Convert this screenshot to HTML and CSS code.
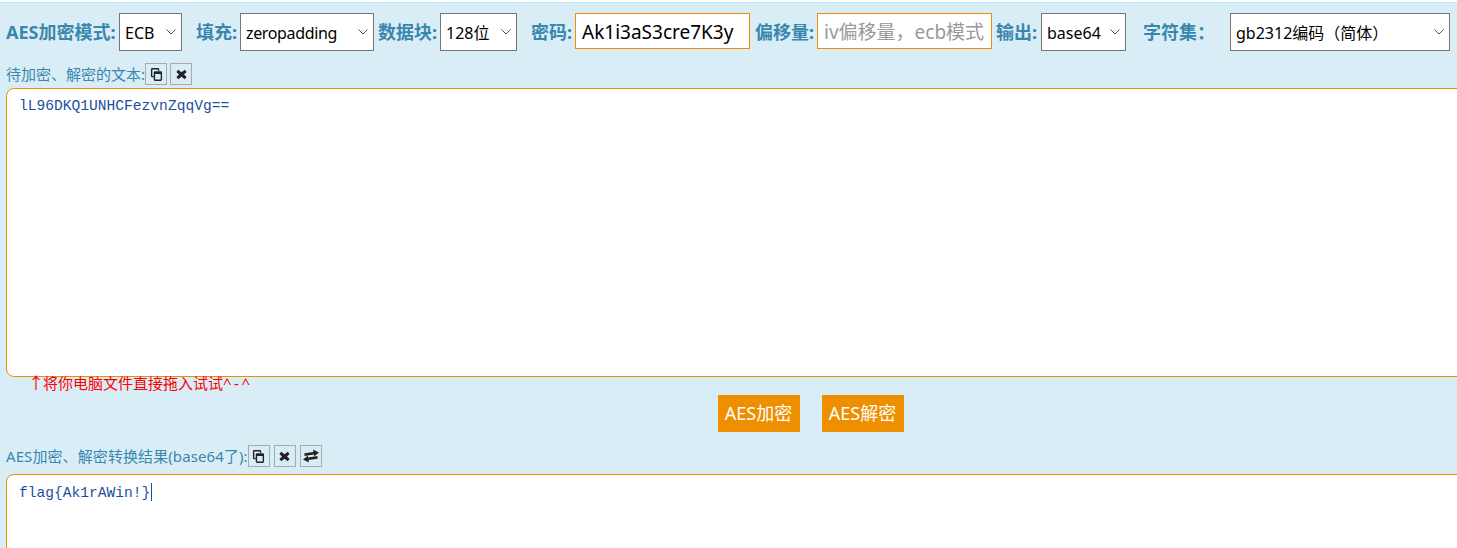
FILE: index.html
```html
<!DOCTYPE html>
<html lang="zh-CN">
<head>
<meta charset="utf-8">
<title>AES加密</title>
<link rel="stylesheet" href="styles.css">
</head>
<body>
<main class="panel">
  <div class="options">
    <label class="opt opt-mode">AES加密模式:</label>
    <select class="sel sel-mode"><option>ECB</option></select>
    <label class="opt opt-pad">填充:</label>
    <select class="sel sel-pad"><option>zeropadding</option></select>
    <label class="opt opt-block">数据块:</label>
    <select class="sel sel-block"><option>128位</option></select>
    <label class="opt opt-key">密码:</label>
    <input class="field field-key" type="text" value="Ak1i3aS3cre7K3y">
    <label class="opt opt-iv">偏移量:</label>
    <input class="field field-iv" type="text" placeholder="iv偏移量，ecb模式不用填写">
    <label class="opt opt-out">输出:</label>
    <select class="sel sel-out"><option>base64</option></select>
    <label class="opt opt-charset">字符集：</label>
    <select class="sel sel-charset"><option>gb2312编码（简体）</option></select>
  </div>

  <div class="caption caption-in">
    <span class="caption-text">待加密、解密的文本:</span>
    <button class="tool" type="button" aria-label="复制">
      <svg viewBox="0 0 14 14" class="ico"><path fill-rule="evenodd" d="M2.500 0h6A1.500 1.500 0 0 1 10 1.500V3H8.500V1.500h-6v7H4V10H2.500A1.500 1.500 0 0 1 1 8.500v-7A1.500 1.500 0 0 1 2.500 0z"/><path fill-rule="evenodd" d="M5.500 3.500h6A1.500 1.500 0 0 1 13 5v7.500a1.500 1.500 0 0 1-1.500 1.500h-6A1.500 1.500 0 0 1 4 12.500V5a1.500 1.500 0 0 1 1.500-1.500zM5.500 6.500v6h6v-6z"/></svg>
    </button>
    <button class="tool" type="button" aria-label="清空">
      <svg viewBox="0 0 14 14" class="ico"><path d="M3.500 2 7 4.600 10.500 2l2 2.200L9.700 7l2.800 2.800-2 2.200L7 9.400 3.500 12l-2-2.200L4.300 7 1.500 4.200z"/></svg>
    </button>
  </div>
  <textarea class="box box-in" spellcheck="false">lL96DKQ1UNHCFezvnZqqVg==</textarea>
  <p class="hint"><span class="arrow">↑</span>将你电脑文件直接拖入试试<span class="smile">^-^</span></p>

  <div class="actions">
    <button class="act" type="button">AES加密</button>
    <button class="act" type="button">AES解密</button>
  </div>

  <div class="caption caption-out">
    <span class="caption-text">AES加密、解密转换结果(base64了):</span>
    <button class="tool" type="button" aria-label="复制">
      <svg viewBox="0 0 14 14" class="ico"><path fill-rule="evenodd" d="M2.500 0h6A1.500 1.500 0 0 1 10 1.500V3H8.500V1.500h-6v7H4V10H2.500A1.500 1.500 0 0 1 1 8.500v-7A1.500 1.500 0 0 1 2.500 0z"/><path fill-rule="evenodd" d="M5.500 3.500h6A1.500 1.500 0 0 1 13 5v7.500a1.500 1.500 0 0 1-1.500 1.500h-6A1.500 1.500 0 0 1 4 12.500V5a1.500 1.500 0 0 1 1.500-1.500zM5.500 6.500v6h6v-6z"/></svg>
    </button>
    <button class="tool" type="button" aria-label="清空">
      <svg viewBox="0 0 14 14" class="ico"><path d="M3.500 2 7 4.600 10.500 2l2 2.200L9.700 7l2.800 2.800-2 2.200L7 9.400 3.500 12l-2-2.200L4.300 7 1.500 4.200z"/></svg>
    </button>
    <button class="tool" type="button" aria-label="交换">
      <svg viewBox="0 0 16 14" class="ico ico-wide"><path d="M10 .5 16 3.500 11 7.500V5.500L1.500 7V4.300L10.500 3z"/><path d="M6 13.500 0 10.500 5 6.500V8.500L14.500 7v2.700L5.500 11z"/></svg>
    </button>
  </div>
  <div class="box box-out">flag{Ak1rAWin!}<span class="caret"></span></div>
</main>
</body>
</html>
```
FILE: styles.css
```css
* { box-sizing: border-box; }
html, body { margin: 0; height: 100%; overflow: hidden; background: #fff; }
body { font-family: "Noto Sans", "Noto Sans CJK SC", sans-serif; }

.panel {
  width: 1457px;
  height: 548px;
  margin-top: 2px;
  padding-top: 10px;
  background: #d9edf7;
  border-top: 1px solid #bce8f1;
  overflow: hidden;
}

.options { display: flex; align-items: flex-start; height: 38px; padding-left: 6px; white-space: nowrap; }
.opt { font-size: 18px; font-weight: 700; color: #3a87ad; line-height: 38px; }
.opt-mode { width: 113px; }
.opt-pad { margin-left: 14px; width: 44px; }
.opt-block { margin-left: 4px; width: 62px; }
.opt-key { margin-left: 14px; width: 44px; }
.opt-iv { margin-left: 5px; width: 62px; }
.opt-out { margin-left: 4px; width: 45px; }
.opt-charset { margin-left: 17px; width: 87px; }

.sel {
  appearance: none;
  height: 38px;
  padding: 2px 0 0 5px;
  font: 16px "Noto Sans", "Noto Sans CJK SC", sans-serif;
  color: #000;
  border: 1px solid #767676;
  border-radius: 0;
  background: #fff url("data:image/svg+xml,%3Csvg xmlns='http://www.w3.org/2000/svg' width='10' height='6'%3E%3Cpath d='M.5.5 5 5 9.500.5' fill='none' stroke='%23555' stroke-width='1'/%3E%3C/svg%3E") no-repeat right 5px center;
}
.sel-mode { width: 63px; }
.sel-pad { width: 134px; letter-spacing: -.35px; }
.sel-block { width: 77px; }
.sel-out { width: 85px; }
.sel-charset { width: 220px; }

.field {
  height: 36px;
  padding: 1px 6px 0;
  border: 1px solid #ee8f00;
  border-radius: 0;
  background: #fff;
  color: #000;
  font: 19px "Noto Sans", "Noto Sans CJK SC", sans-serif;
}
.field::placeholder { color: #999; opacity: 1; }
.field-key { width: 175px; }
.field-iv { width: 175px; }

.caption { display: flex; align-items: center; font-size: 15px; color: #3a87ad; height: 22px; padding-left: 6px; }
.caption-text { padding-bottom: 2px; }
.caption-in { margin: 12px 0 3px; }
.caption-in .tool + .tool { margin-left: 3px; }
.caption-out { margin: 13px 0 7px; }
.caption-out .caption-text { letter-spacing: .09px; }
.caption-out .tool + .tool { margin-left: 4px; }

.tool {
  display: flex;
  align-items: center;
  justify-content: center;
  width: 22px;
  height: 22px;
  padding: 0;
  background: transparent;
  border: 1px solid #aaa;
  border-radius: 0;
}
.ico { width: 13px; height: 13px; fill: #222; display: block; }
.ico-wide { width: 16px; height: 14px; }

.box {
  display: block;
  width: 1480px;
  margin: 0 0 0 6px;
  padding: 8px 12px;
  background: #fff;
  border: 1px solid #ee8f00;
  border-radius: 8px;
  resize: none;
  outline: none;
  color: #1d4f9c;
  font: 14.600px/20px "Liberation Mono", monospace;
}
.box-in { height: 289px; padding-top: 7px; }
.box-out { height: 200px; }
.caret { display: inline-block; width: 1px; height: 18px; margin-left: 1px; background: #1d4f9c; vertical-align: -4px; }

.hint { margin: 0; padding-left: 28px; height: 18px; font-size: 15px; line-height: 12px; color: #f00; white-space: nowrap; }
.arrow { display: inline-block; width: 15px; font-size: 16px; font-weight: 400; }
.smile { letter-spacing: 2.500px; }

.actions { display: flex; justify-content: center; gap: 22px; height: 37px; padding-left: 164px; }
.act {
  width: 82px;
  height: 37px;
  padding: 0 0 3px;
  background: #ee8f00;
  color: #fff;
  border: 0;
  border-radius: 0;
  font: 18px "Noto Sans", "Noto Sans CJK SC", sans-serif;
}
```
